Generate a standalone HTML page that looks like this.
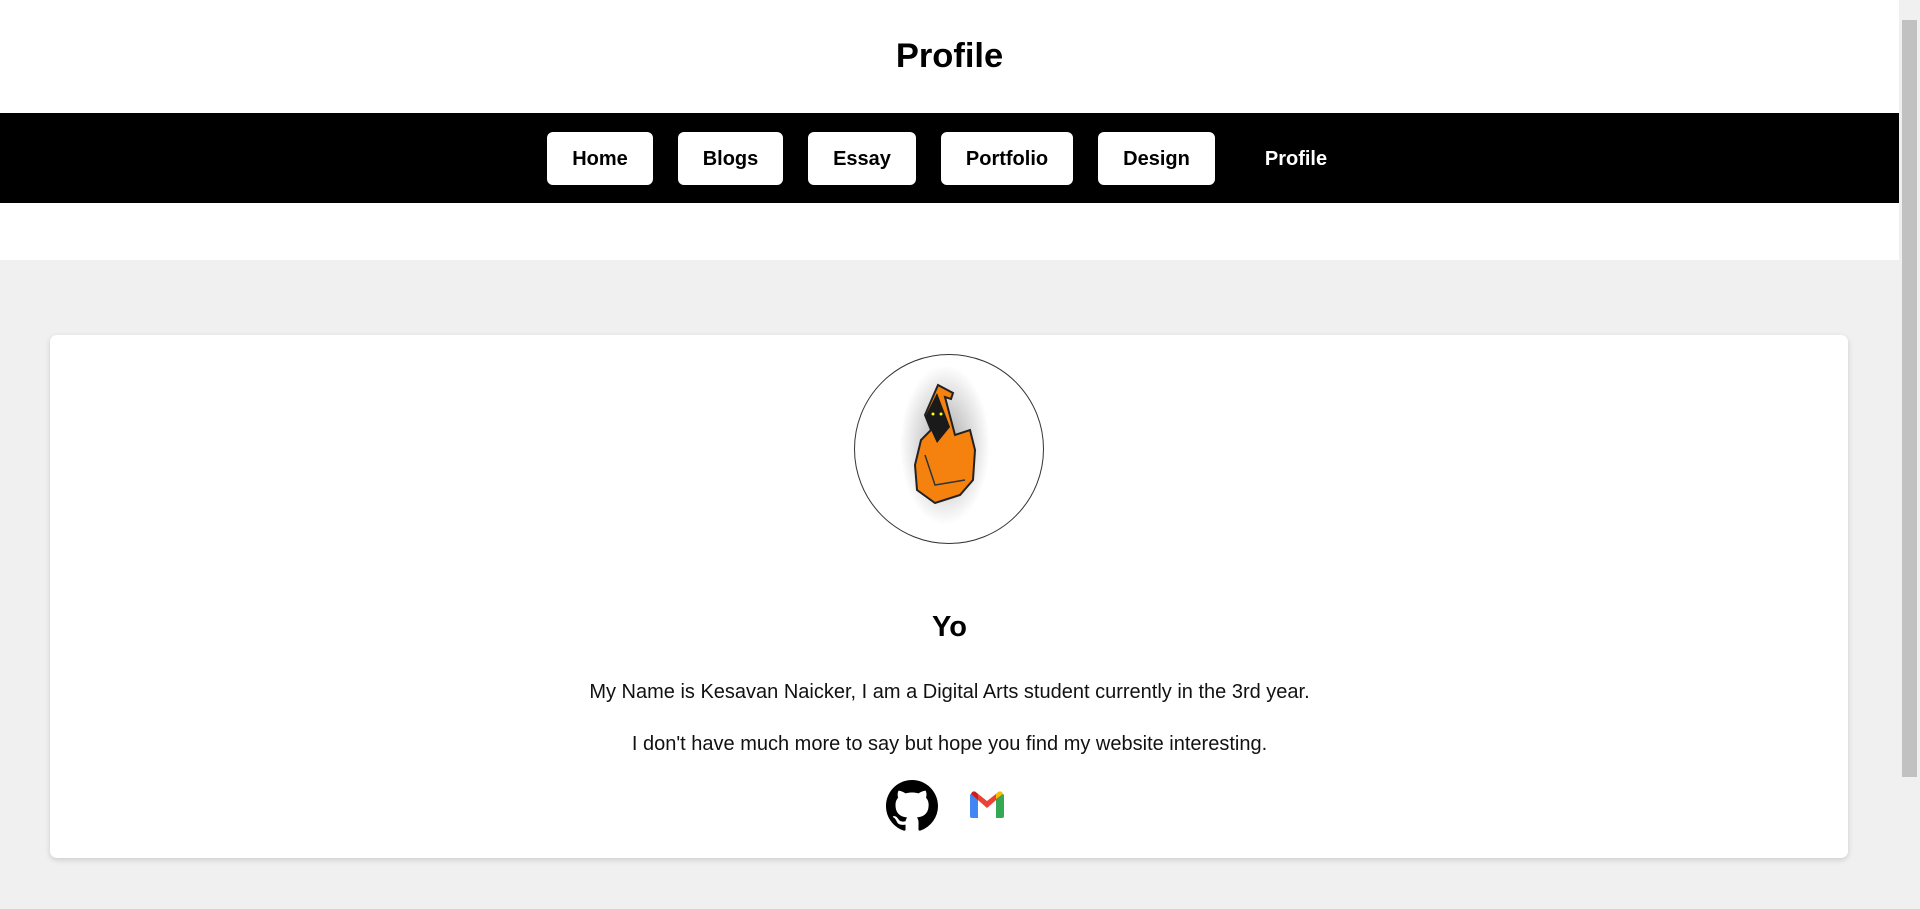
<!DOCTYPE html>
<html><head><meta charset="utf-8"><style>
*{margin:0;padding:0;box-sizing:border-box}
html,body{width:1920px;height:909px;overflow:hidden;font-family:"Liberation Sans",Arial,sans-serif;background:#f0f0f0}
.top{position:absolute;left:0;top:0;width:1899px;height:260px;background:#fff}
h1{position:absolute;left:0;width:1899px;top:35px;text-align:center;font-size:34.5px;font-weight:bold;line-height:42px}
nav{position:absolute;left:0;top:113px;width:1899px;height:90px;background:#000}
.b{position:absolute;top:19px;height:53px;background:#fff;border-radius:6px;color:#000;font-weight:bold;font-size:20px;line-height:54px;text-align:center}
.sb{position:absolute;right:0;top:0;width:21px;height:909px;background:#f0f0f0}
.th{position:absolute;right:3px;top:20px;width:15px;height:757px;background:#c1c1c1}
.card{position:absolute;left:50px;top:335px;width:1798px;height:523px;background:#fff;border-radius:7px;box-shadow:0 2px 6px rgba(0,0,0,.15)}
.av{position:absolute;left:854px;top:354px;width:190px;height:190px;border:1.5px solid #333;border-radius:50%;background:#fff;overflow:hidden}
.t{position:absolute;left:0;width:1899px;text-align:center;color:#111}
</style></head><body>
<div class="top"></div>
<h1>Profile</h1>
<nav>
<div class="b" style="left:547px;width:106px">Home</div>
<div class="b" style="left:678px;width:105px">Blogs</div>
<div class="b" style="left:808px;width:108px">Essay</div>
<div class="b" style="left:941px;width:132px">Portfolio</div>
<div class="b" style="left:1098px;width:117px">Design</div>
<div style="position:absolute;left:1246px;width:100px;top:19px;line-height:54px;text-align:center;color:#fff;font-weight:bold;font-size:20px">Profile</div>
</nav>
<div class="card"></div>
<div class="av"><svg width="190" height="190" viewBox="0 0 190 190">
<defs><radialGradient id="g"><stop offset="0" stop-color="#000" stop-opacity=".35"/><stop offset="1" stop-color="#000" stop-opacity="0"/></radialGradient></defs>
<ellipse cx="90" cy="90" rx="45" ry="80" fill="url(#g)"/>
<path d="M83 30 L98 38 L96 44 L90 42 L100 80 L115 75 L120 95 L118 125 L105 140 L80 148 L62 135 L60 110 L66 85 L76 75 L70 60 Z" fill="#f5820f" stroke="#222" stroke-width="2"/>
<path d="M82 38 L95 72 L82 88 L70 62 Z" fill="#1a1a1a"/>
<circle cx="78" cy="59" r="1.5" fill="#ff0"/><circle cx="86" cy="59" r="1.5" fill="#ff0"/>
<path d="M70 100 L80 130 L110 125" fill="none" stroke="#333" stroke-width="1.5"/>
</svg></div>
<div class="t" style="top:608px;font-size:29px;font-weight:bold;line-height:38px;color:#000">Yo</div>
<div class="t" style="top:680px;font-size:20px;line-height:24px">My Name is Kesavan Naicker, I am a Digital Arts student currently in the 3rd year.</div>
<div class="t" style="top:732px;font-size:20px;line-height:24px">I don't have much more to say but hope you find my website interesting.</div>
<svg style="position:absolute;left:886px;top:780px" width="52" height="52" viewBox="0 0 16 16"><path fill="#000" d="M8 0C3.58 0 0 3.58 0 8c0 3.54 2.29 6.53 5.47 7.59.4.07.55-.17.55-.38 0-.19-.01-.82-.01-1.49-2.01.37-2.53-.49-2.69-.94-.09-.23-.48-.94-.82-1.13-.28-.15-.68-.52-.01-.53.63-.01 1.08.58 1.23.82.72 1.21 1.87.87 2.33.66.07-.52.28-.87.51-1.07-1.78-.2-3.64-.89-3.64-3.95 0-.87.31-1.59.82-2.15-.08-.2-.36-1.02.08-2.12 0 0 .67-.21 2.2.82.64-.18 1.32-.27 2-.27.68 0 1.36.09 2 .27 1.53-1.04 2.2-.82 2.2-.82.44 1.1.16 1.92.08 2.12.51.56.82 1.27.82 2.15 0 3.07-1.87 3.75-3.65 3.95.29.25.54.73.54 1.48 0 1.07-.01 1.93-.01 2.2 0 .21.15.46.55.38A8.013 8.013 0 0 0 16 8c0-4.42-3.58-8-8-8z"/></svg>
<svg style="position:absolute;left:968px;top:791px" width="38" height="29" viewBox="0 0 38 29">
<path d="M2 5 Q2 2 5 3 L10 7 L10 27 L4 27 Q2 27 2 25 Z" fill="#4285f4"/>
<path d="M28 7 L33 3 Q36 2 36 5 L36 25 Q36 27 34 27 L28 27 Z" fill="#34a853"/>
<path d="M3 3 L19 17 L35 3 L31 0.5 L19 10 L7 0.5 Z" fill="#ea4335"/>
<path d="M28 8 L35 3 Q34 0 31 0.5 L28 3 Z" fill="#fbbc04"/>
<path d="M3 3 L10 9 L10 3 L7 0.5 Q4 0 3 3 Z" fill="#c5221f"/>
</svg>
<div class="sb"><div class="th"></div></div>
</body></html>
